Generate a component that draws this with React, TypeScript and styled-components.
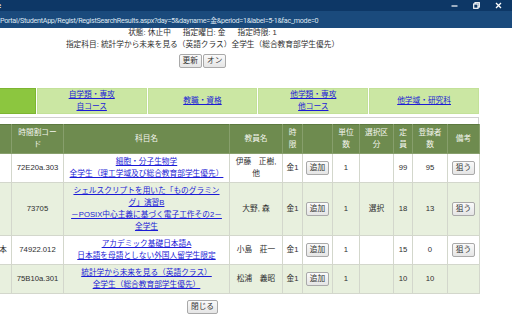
import React from 'react';
import styled, { createGlobalStyle } from 'styled-components';

const Global = createGlobalStyle`
  html, body { margin: 0; padding: 0; background: #fff; overflow: hidden; }
  body { width: 512px; height: 320px; font-family: "Liberation Sans", "Noto Sans CJK JP", sans-serif; }
`;

const Window = styled.div`
  width: 512px;
  height: 320px;
  overflow: hidden;
  display: flex;
  flex-direction: column;
`;

const TitleBar = styled.div`
  height: 11px;
  flex: none;
  background: #0d3766;
  display: flex;
  align-items: center;
  justify-content: space-between;
  color: #fff;
  font-family: "Open Sans", sans-serif;
  font-size: 7px;
  font-weight: bold;
  line-height: 11px;
`;

const TitleText = styled.span`
  margin-left: -3px;
`;

const Controls = styled.div`
  display: flex;
  align-items: center;
  padding-right: 3px;
`;

const Ctl = styled.span`
  width: 22px;
  height: 11px;
  display: flex;
  align-items: center;
  justify-content: center;
`;

const UrlBar = styled.div`
  height: 17px;
  flex: none;
  background: #1a4a7c;
  color: #dde6f1;
  font-family: Roboto, "Noto Sans CJK JP", sans-serif;
  font-size: 7.2px;
  letter-spacing: -0.3px;
  display: flex;
  align-items: center;
  white-space: nowrap;
  overflow: hidden;
`;

const Viewport = styled.div`
  flex: 1;
  overflow: hidden;
`;

const Page = styled.div`
  width: 553px;
  margin-left: -74px;
  text-align: center;
  color: #2e2e2e;
  font-size: 7.7px;
  line-height: 12px;
  font-family: "Liberation Sans", "Noto Sans CJK JP", sans-serif;
`;

const Info = styled.div`
  line-height: 12px;
  margin-top: -1px;
`;

const StatusLine = styled.div`
  display: flex;
  justify-content: center;
  gap: 12px;
`;

const ButtonRow = styled.div`
  display: flex;
  justify-content: center;
  gap: 1px;
  margin-top: 3px;
`;

const Btn = styled.button`
  font-family: inherit;
  font-size: 7.7px;
  line-height: 12px;
  height: 14px;
  padding: 0 3px;
  background: linear-gradient(#fafafa, #e5e5e5);
  border: 1px solid #a9a9a9;
  border-radius: 2px;
  color: #333;
  cursor: pointer;
`;

const Tabs = styled.div`
  margin-top: 20px;
  display: grid;
  grid-template-columns: repeat(5, 1fr);
  gap: 1px;
  height: 25px;
`;

const Tab = styled.div<{ $active?: boolean }>`
  background: ${(p) => (p.$active ? '#8cc63f' : '#cbe7a3')};
  border: 1px solid ${(p) => (p.$active ? '#7db532' : '#c3e199')};
  display: flex;
  flex-direction: column;
  align-items: center;
  justify-content: center;
`;

const A = styled.a`
  color: #1b1bd6;
  text-decoration: underline;
`;

const Spacer = styled.div`
  margin-top: 4px;
  height: 6px;
  border: 1px solid #d0d0d0;
  border-bottom: none;
`;

const Table = styled.table`
  width: 553px;
  table-layout: fixed;
  border-collapse: collapse;
  border: 1px solid #c9cdc2;
`;

const Th = styled.th`
  background: #6e8b4f;
  color: #f3f5ee;
  font-weight: normal;
  border: 1px solid #879f6c;
  border-top: 1px solid #5d7a40;
  padding: 2px 2px;
  vertical-align: middle;
`;

const Tr = styled.tr<{ $alt?: boolean }>`
  background: ${(p) => (p.$alt ? '#e8f0de' : '#ffffff')};
`;

const Td = styled.td<{ $right?: boolean }>`
  border: 1px solid #d3d7cc;
  padding: 2px 2px;
  vertical-align: middle;
  text-align: ${(p) => (p.$right ? 'right' : 'center')};
  ${(p) => (p.$right ? 'padding-right: 4px;' : '')}
`;

const CloseRow = styled.div`
  display: flex;
  justify-content: center;
  margin-top: 6px;
`;

const widths = [85, 52, 166, 53, 20, 30, 27, 34, 19, 35, 32];

type Row = {
  dept: string;
  code: string;
  subject: string[];
  teacher: string[];
  period: string;
  credit: string;
  sel: string;
  cap: string;
  reg: string;
  aim: boolean;
};

const rows: Row[] = [
  {
    dept: '',
    code: '72E20a.303',
    subject: ['細胞・分子生物学', '全学生（理工学域及び総合教育部学生優先）'],
    teacher: ['伊藤　正樹,', '他'],
    period: '金1',
    credit: '1',
    sel: '',
    cap: '99',
    reg: '95',
    aim: true,
  },
  {
    dept: '',
    code: '73705',
    subject: [
      'シェルスクリプトを用いた「ものグラミン',
      'グ」演習B',
      '－POSIX中心主義に基づく電子工作その2－',
      '全学生',
    ],
    teacher: ['大野, 森'],
    period: '金1',
    credit: '1',
    sel: '選択',
    cap: '18',
    reg: '13',
    aim: true,
  },
  {
    dept: '日本',
    code: '74922.012',
    subject: ['アカデミック基礎日本語A', '日本語を母語としない外国人留学生限定'],
    teacher: ['小島　莊一'],
    period: '金1',
    credit: '1',
    sel: '',
    cap: '15',
    reg: '0',
    aim: true,
  },
  {
    dept: '',
    code: '75B10a.301',
    subject: ['統計学から未来を見る（英語クラス）', '全学生（総合教育部学生優先）'],
    teacher: ['松浦　義昭'],
    period: '金1',
    credit: '1',
    sel: '',
    cap: '10',
    reg: '10',
    aim: false,
  },
];

const Lines = ({ items }: { items: string[] }) => (
  <>
    {items.map((t, i) => (
      <React.Fragment key={i}>
        {i > 0 && <br />}
        {t}
      </React.Fragment>
    ))}
  </>
);

export default function App() {
  return (
    <Window>
      <Global />
      <TitleBar>
        <TitleText>e</TitleText>
        <Controls>
          <Ctl>
            <svg width="7" height="7" viewBox="0 0 7 7">
              <line x1="0.5" y1="4" x2="6.5" y2="4" stroke="#fff" strokeWidth="1.2" />
            </svg>
          </Ctl>
          <Ctl>
            <svg width="7" height="7" viewBox="0 0 7 7">
              <rect x="2" y="0.7" width="4.3" height="4.3" fill="none" stroke="#fff" strokeWidth="1.2" />
              <rect x="0.7" y="2" width="4.3" height="4.3" fill="#0d3766" stroke="#fff" strokeWidth="1.2" />
            </svg>
          </Ctl>
          <Ctl>
            <svg width="7" height="7" viewBox="0 0 7 7">
              <path d="M1 1 L6 6 M6 1 L1 6" stroke="#fff" strokeWidth="1.3" />
            </svg>
          </Ctl>
        </Controls>
      </TitleBar>
      <UrlBar>
        Portal/StudentApp/Regist/RegistSearchResults.aspx?day=5&amp;dayname=金&amp;period=1&amp;label=5-1&amp;fac_mode=0
      </UrlBar>
      <Viewport>
        <Page>
          <Info>
            <StatusLine>
              <span>状態: 休止中</span>
              <span>指定曜日: 金</span>
              <span>指定時限: 1</span>
            </StatusLine>
            指定科目: 統計学から未来を見る（英語クラス）全学生（総合教育部学生優先）
          </Info>
          <ButtonRow>
            <Btn>更新</Btn>
            <Btn>オン</Btn>
          </ButtonRow>
          <Tabs>
            <Tab $active />
            <Tab>
              <A>自学類・専攻</A>
              <A>自コース</A>
            </Tab>
            <Tab>
              <A>教職・資格</A>
            </Tab>
            <Tab>
              <A>他学類・専攻</A>
              <A>他コース</A>
            </Tab>
            <Tab>
              <A>他学域・研究科</A>
            </Tab>
          </Tabs>
          <Spacer />
          <Table>
            <colgroup>
              {widths.map((w, i) => (
                <col key={i} style={{ width: w }} />
              ))}
            </colgroup>
            <thead>
              <tr>
                <Th>開設学類等</Th>
                <Th>
                  時間割コー
                  <br />ド
                </Th>
                <Th>科目名</Th>
                <Th>教員名</Th>
                <Th>
                  時<br />限
                </Th>
                <Th />
                <Th>
                  単位
                  <br />数
                </Th>
                <Th>
                  選択区
                  <br />分
                </Th>
                <Th>
                  定<br />員
                </Th>
                <Th>
                  登録者
                  <br />数
                </Th>
                <Th>備考</Th>
              </tr>
            </thead>
            <tbody>
              {rows.map((r, i) => (
                <Tr key={r.code} $alt={i % 2 === 1}>
                  <Td $right>{r.dept}</Td>
                  <Td>{r.code}</Td>
                  <Td>
                    {r.subject.map((s, j) => (
                      <React.Fragment key={j}>
                        {j > 0 && <br />}
                        <A>{s}</A>
                      </React.Fragment>
                    ))}
                  </Td>
                  <Td>
                    <Lines items={r.teacher} />
                  </Td>
                  <Td>{r.period}</Td>
                  <Td>
                    <Btn>追加</Btn>
                  </Td>
                  <Td>{r.credit}</Td>
                  <Td>{r.sel}</Td>
                  <Td>{r.cap}</Td>
                  <Td>{r.reg}</Td>
                  <Td>{r.aim && <Btn>狙う</Btn>}</Td>
                </Tr>
              ))}
            </tbody>
          </Table>
          <CloseRow>
            <Btn>閉じる</Btn>
          </CloseRow>
        </Page>
      </Viewport>
    </Window>
  );
}
